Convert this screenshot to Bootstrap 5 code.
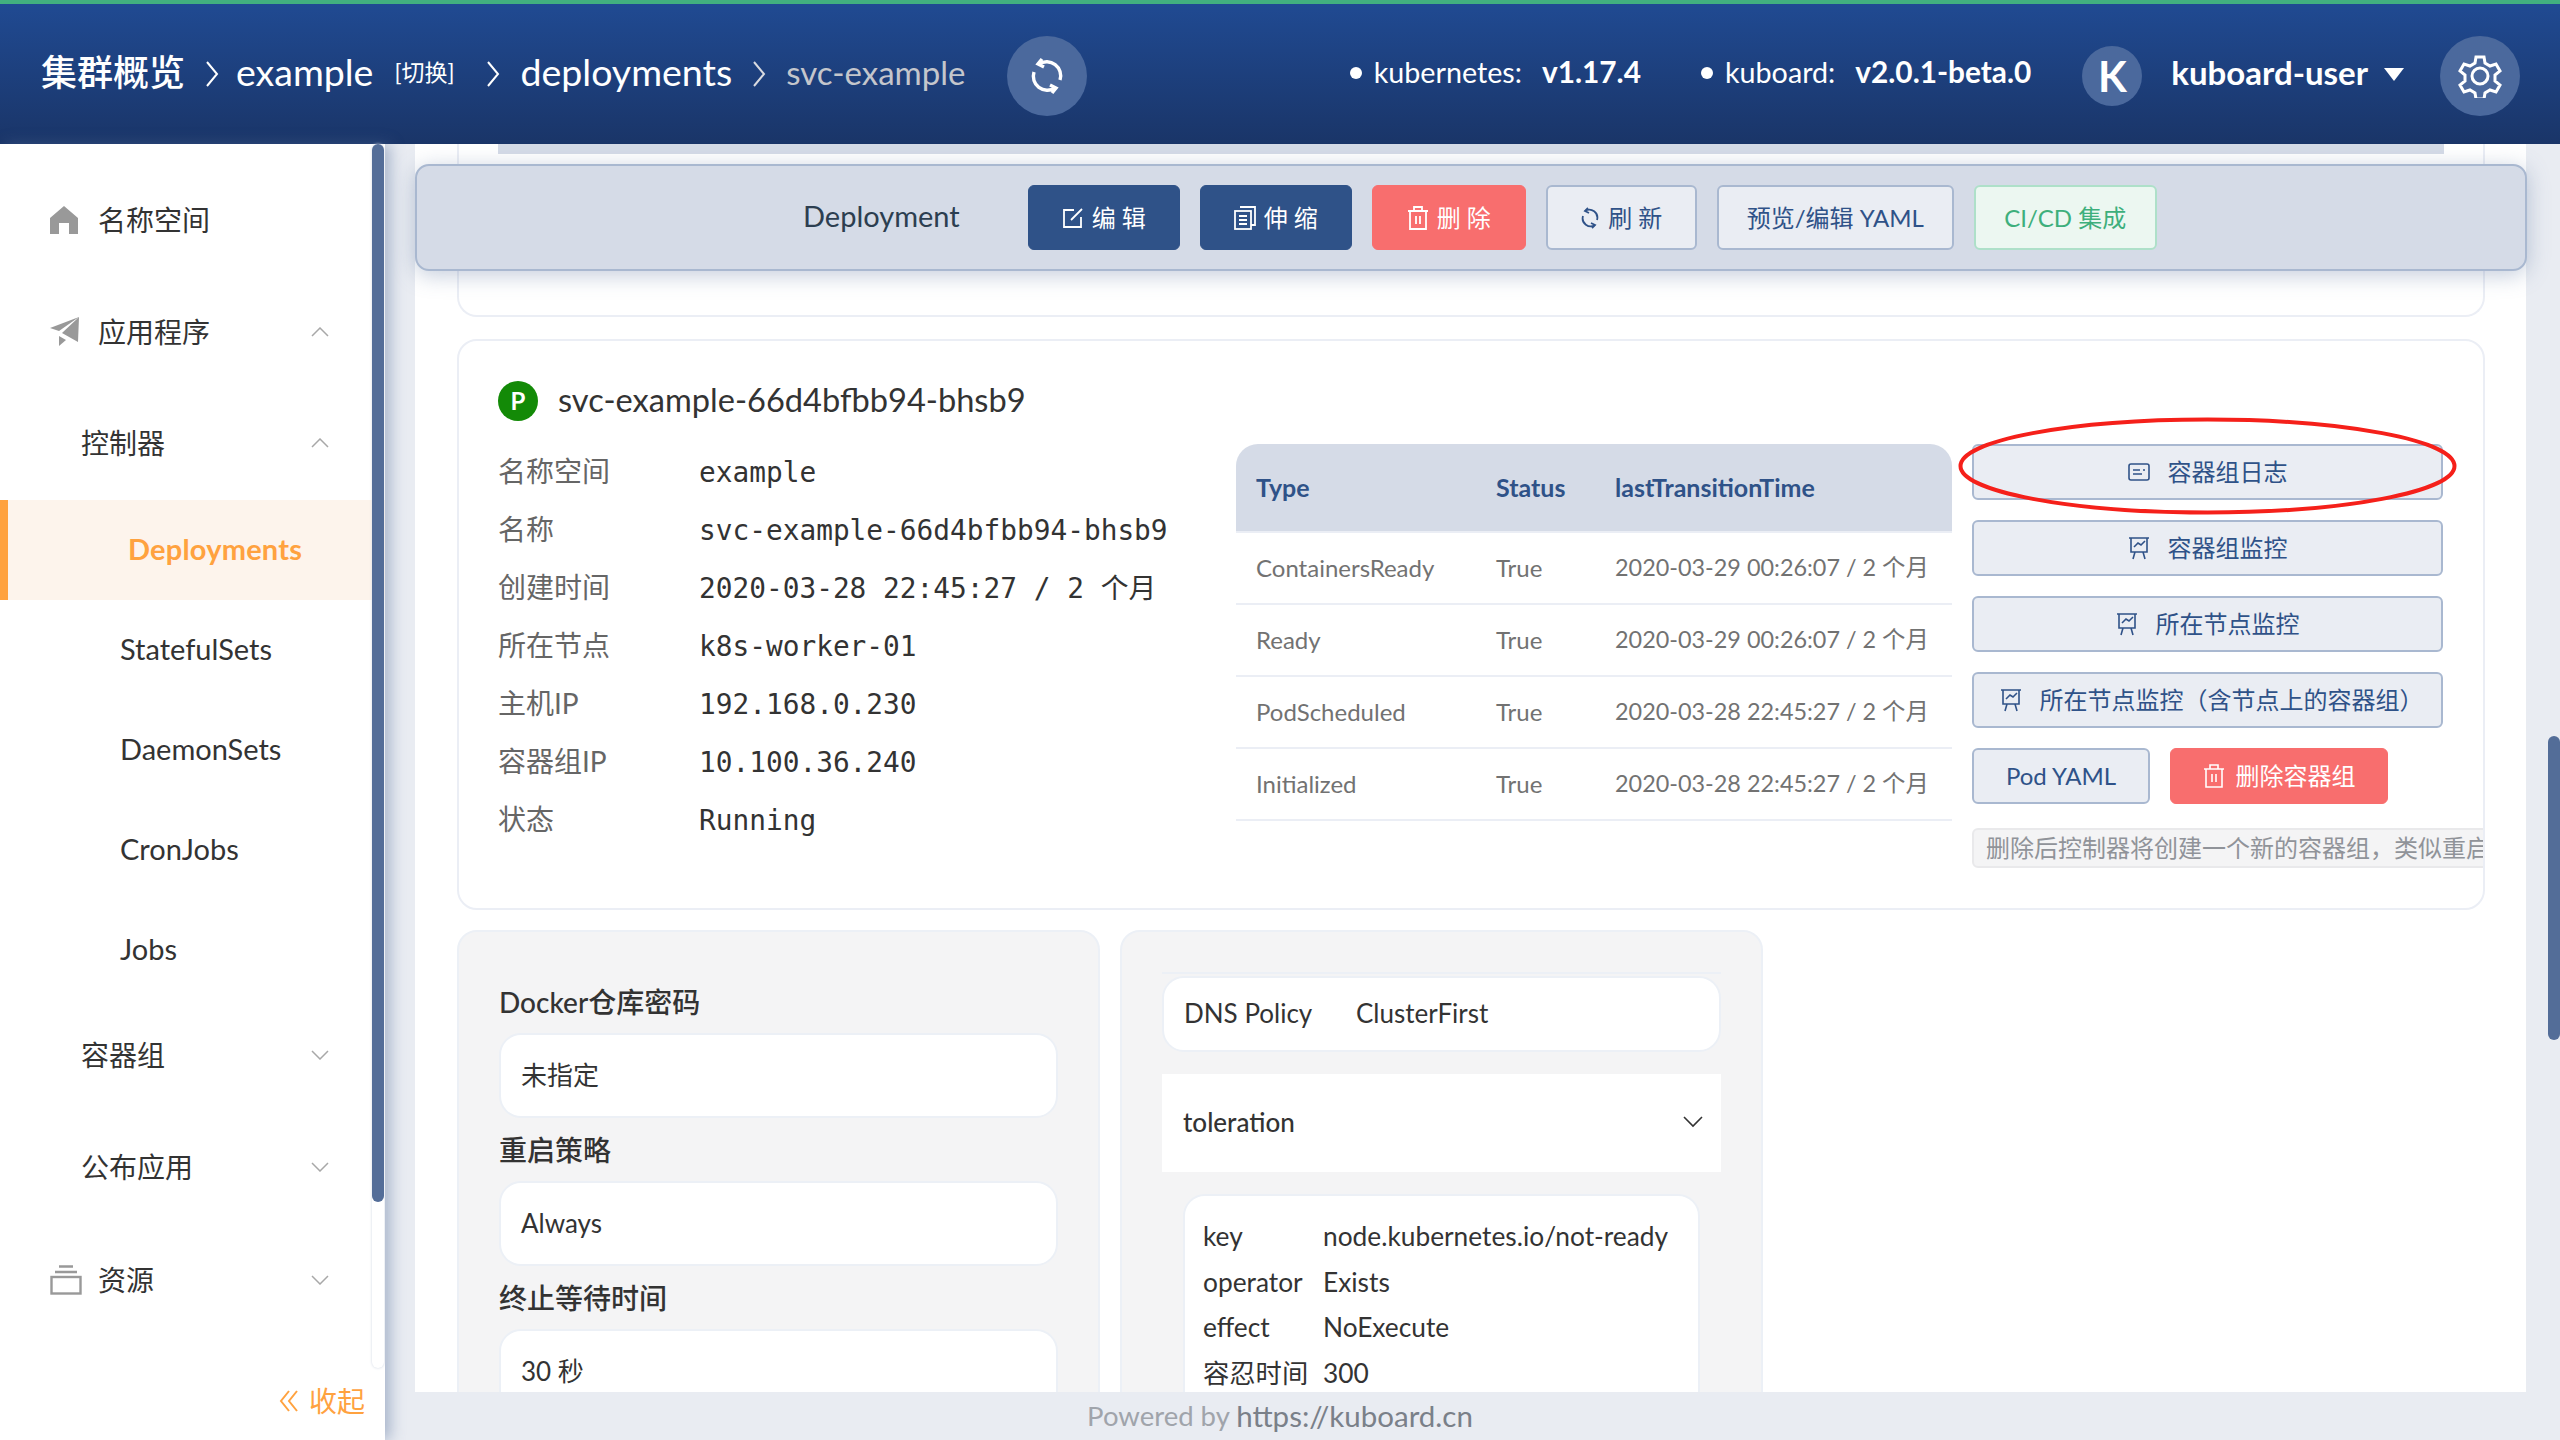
<!DOCTYPE html>
<html lang="zh-CN">
  <head>
    <meta charset="UTF-8" />
    <title>svc-example | Kuboard</title>
    <link href="https://cdn.jsdelivr.net/npm/bootstrap@5.3.0/dist/css/bootstrap.min.css" rel="stylesheet" />
    <style>
      html, body { height: 100%; }
      body {
        width: 2560px; height: 1440px; overflow: hidden;
        font-family: Lato, "Noto Sans CJK SC", sans-serif;
        color: #333; background: #e9ecf2; font-size: 28px;
      }
      svg { display: block; flex: none; }

      /* header */
      .top-bar {
        height: 144px; border-top: 4px solid #42b07f; color: #fff; padding-left: 41px;
        background: linear-gradient(#204a92, #1a3568);
      }
      .crumb-root { font-size: 36px; font-weight: 500; margin-bottom: 5px; }
      .crumb-link { font-size: 37.5px; margin-bottom: 3px; }
      .crumb-switch { font-size: 23px; margin-left: 21px; margin-bottom: 3px; }
      .crumb-last { font-size: 33px; color: #c4c6cc; margin-bottom: 3px; }
      .crumb-sep { margin: 0 20px; }
      .sep-first { margin-right: 17px; }
      .sep-wide { margin-left: 32px; }
      .round-btn {
        width: 80px; height: 80px; border-radius: 50%; background: #4b699d; margin-top: 4px;
        display: flex; align-items: center; justify-content: center; flex: none;
      }
      .round-btn.avatar { width: 60px; height: 60px; font-size: 42px; font-weight: 700; }
      .sync-btn { margin-left: 42px; }
      .gear-btn { margin-right: 40px; }
      .ver-info { font-size: 28.7px; margin-bottom: 3px; }
      .ver-k8s { margin-right: 60px; }
      .ver-board { margin-right: 51px; }
      .ver-info i { display: block; width: 12px; height: 12px; border-radius: 50%; background: #fff; margin-right: 12px; }
      .ver-info b { font-weight: 700; font-size: 29.8px; margin-left: 20px; }
      .user-name { font-size: 33px; font-weight: 700; margin: 0 16px 3px 29px; }
      .user-caret { width: 0; height: 0; border: 10px solid transparent; border-top: 13px solid #fff; border-bottom: 0; margin-right: 36px; }

      /* side menu */
      .side-menu { width: 385px; height: 1296px; background: #fff; flex: none; padding-top: 20px; box-shadow: 5px 0 14px rgba(83, 109, 152, .45); z-index: 3; }
      .side-item { height: 112px; padding-right: 56px; color: #333; }
      .side-item.lvl-1 { padding-left: 50px; }
      .side-item.lvl-2 { padding-left: 81px; padding-bottom: 3px; }
      .side-item .item-icon { width: 28px; margin-right: 20px; }
      .side-sub { height: 100px; padding-left: 120px; padding-bottom: 3px; font-size: 29px; color: #333; }
      .side-sub.active { background: #fdf4ec; border-left: 8px solid #ffa23f; padding-left: 120px; color: #ffa23f; font-weight: 700; letter-spacing: .2px; }
      .side-track { top: 0; right: 1px; width: 12px; height: 1224px; border-radius: 6px; box-shadow: 0 0 3px #cfd6e2; background: #fff; }
      .side-thumb { height: 1058px; border-radius: 6px; background: #536d98; }
      .side-fold { right: 20px; bottom: 18px; color: #ffa23f; font-size: 28px; gap: 10px; }

      /* main area */
      .main-area { min-width: 0; height: 1296px; }
      .main-scroll { min-height: 0; overflow: hidden; margin: 0 34px 0 30px; padding: 0 41px 0 42px; background: #fff; }
      .main-foot { height: 48px; font-size: 27.5px; color: #a0a4ab; flex: none; padding-right: 385px; }
      .main-foot span { color: #7a8089; font-size: 29.5px; }
      .page-thumb { right: 0; top: 592px; width: 12px; height: 304px; border-radius: 6px; background: #536d98; z-index: 3; }

      .action-bar {
        left: 30px; right: 33px; top: 20px; height: 107px; z-index: 2; gap: 20px;
        background: #d5dbe7; border: 2px solid #a9b8d0; border-radius: 14px;
        box-shadow: 0 4px 22px rgba(83, 109, 152, .35); padding-left: 386px;
      }
      .action-title { font-size: 29px; color: #2c3e50; margin-right: 48px; margin-bottom: 3px; }
      .act-btn {
        --bs-btn-padding-x: 0; --bs-btn-padding-y: 0; --bs-btn-font-size: 24px; --bs-btn-border-radius: 6px;
        display: flex; align-items: center; justify-content: center; white-space: nowrap; line-height: 1;
      }
      .btn-navy { --bs-btn-bg: #2f5288; --bs-btn-border-color: #2f5288; --bs-btn-color: #fff; }
      .btn-red { --bs-btn-bg: #f86e6e; --bs-btn-border-color: #f86e6e; --bs-btn-color: #fff; }
      .btn-pale { --bs-btn-bg: #eaedf3; --bs-btn-border-color: #a9b8d0; --bs-btn-color: #2f5288; --bs-btn-border-width: 2px; }
      .btn-mint { --bs-btn-bg: #ecf7f1; --bs-btn-border-color: #aee0c9; --bs-btn-color: #3eaf7c; --bs-btn-border-width: 2px; }
      .action-bar .act-btn { height: 65px; }
      .w-edit { width: 152px; } .w-del { width: 154px; } .w-ref { width: 151px; } .w-yaml { width: 237px; } .w-ci { width: 183px; }

      .stub-card { height: 173px; border: 2px solid #ebeef5; border-top: 0; border-radius: 0 0 20px 20px; padding: 0 39px; margin-bottom: 22px; }
      .stub-strip { height: 10px; background: #d5dbe7; }

      .pod-card { height: 571px; border: 2px solid #ebeef5; border-radius: 20px; padding: 37px 0 0 39px; overflow: hidden; margin-bottom: 20px; }
      .pod-badge { width: 40px; height: 40px; border-radius: 50%; background: #138a07; color: #fff; font-size: 24px; font-weight: 700; margin-right: 20px; }
      .pod-title { font-size: 32.6px; line-height: 44px; color: #333; margin-bottom: 2px; }
      .pod-info { width: 738px; flex: none; margin-top: 20px; }
      .info-row { height: 58px; }
      .info-key { width: 201px; color: #666; font-size: 28px; margin-bottom: 5px; }
      .info-val { font-family: "DejaVu Sans Mono", "Noto Sans CJK SC", monospace; font-size: 27.8px; color: #333; white-space: nowrap; }

      .cond-wrap { margin-top: 20px; }
      .cond-table { width: 716px; margin: 0; font-size: 24px; table-layout: fixed; }
      .cond-table th, .cond-table td { padding: 0 0 0 20px; vertical-align: middle; border-bottom: 2px solid #ebeef5; white-space: nowrap; }
      .cond-table th { height: 88px; background: #d5dbe7; color: #2f5288; font-weight: 700; font-size: 25px; }
      .cond-table td { height: 72px; color: #727272; }
      .cond-table td:last-child { font-size: 23.4px; }
      .cond-table th:first-child { border-top-left-radius: 22px; }
      .cond-table th:last-child { border-top-right-radius: 22px; }
      .col-type { width: 240px; }
      .col-status { width: 119px; }
      .pod-side { width: 471px; margin: 20px 0 0 20px; flex: none; gap: 20px; position: relative; }
      .pod-side .act-btn { height: 56px; font-size: 24px; }
      .pod-side .act-btn svg { margin-right: 18px; }
      .pod-side .btn-long { padding-left: 8px; }
      .pod-side .w-pod { width: 178px; }
      .pod-side .w-podrm { width: 218px; }
      .pod-side .w-podrm svg { margin-right: 11px; }
      .pod-btns { gap: 20px; }
      .pod-note { width: 540px; height: 40px; background: #f4f4f5; border: 2px solid #e9e9eb; border-radius: 6px; color: #909399; font-size: 24px; padding-left: 12px; margin-top: 4px; white-space: nowrap; line-height: 36px; }
      .mark-ring { left: -14px; top: -27px; }

      .grey-box { height: 470px; background: #f4f4f5; border: 2px solid #ecf0f6; border-radius: 20px 20px 0 0; }
      .box-left { width: 643px; padding: 55px 40px 0; margin-right: 20px; }
      .box-right { width: 643px; padding: 40px 40px 0; }
      .box-label { font-size: 28px; font-weight: 500; line-height: 30px; height: 30px; color: #333; }
      .white-field { height: 85px; background: #fff; border: 2px solid #ecf0f6; border-radius: 22px; padding-left: 20px; margin: 16px 0 17px; font-size: 26px; color: #333; }
      .dns-line { height: 2px; background: #ecf0f6; margin-bottom: 2px; }
      .dns-row { height: 76px; background: #fff; border: 2px solid #ecf0f6; border-radius: 22px; padding: 0 0 2px 20px; font-size: 26px; margin-bottom: 22px; }
      .dns-row span:first-child { width: 172px; }
      .coll-head { height: 98px; background: #fff; padding: 0 18px 2px 21px; font-size: 26px; font-weight: 500; }
      .toler-card { height: 300px; background: #fff; border: 2px solid #ecf0f6; border-radius: 22px; margin: 22px 21px 0; padding: 18px 18px; font-size: 26.3px; }
      .toler-row { height: 45.5px; }
      .toler-row span:first-child { width: 120px; }
    </style>
  </head>
  <body>
    <header class="top-bar d-flex align-items-center">
      <span class="crumb-root">集群概览</span>
      <svg class="crumb-sep sep-first" width="14" height="30" viewBox="0 0 14 30" fill="none" stroke="#fff" stroke-width="2"><path d="M2 3l10 12L2 27"/></svg>
      <span class="crumb-link">example</span>
      <span class="crumb-switch">[切换]</span>
      <svg class="crumb-sep sep-wide" width="14" height="30" viewBox="0 0 14 30" fill="none" stroke="#fff" stroke-width="2"><path d="M2 3l10 12L2 27"/></svg>
      <span class="crumb-link">deployments</span>
      <svg class="crumb-sep" width="14" height="30" viewBox="0 0 14 30" fill="none" stroke="#d8dae0" stroke-width="2"><path d="M2 3l10 12L2 27"/></svg>
      <span class="crumb-last">svc-example</span>
      <div class="round-btn sync-btn">
        <svg width="40" height="40" viewBox="0 0 40 40" fill="none" stroke="#fff" stroke-width="3.4"><path d="M15 3l-4 5 6 3"/><path d="M12 8a14 14 0 0 1 21 16"/><path d="M25 37l4-5-6-3"/><path d="M28 32A14 14 0 0 1 7 16"/></svg>
      </div>
      <div class="ms-auto d-flex align-items-center">
        <div class="ver-info ver-k8s d-flex align-items-center"><i></i><span>kubernetes:</span><b>v1.17.4</b></div>
        <div class="ver-info ver-board d-flex align-items-center"><i></i><span>kuboard:</span><b>v2.0.1-beta.0</b></div>
        <div class="round-btn avatar">K</div>
        <span class="user-name">kuboard-user</span>
        <span class="user-caret"></span>
        <div class="round-btn gear-btn">
          <svg width="44" height="44" viewBox="0 0 44 44" fill="none" stroke="#fff" stroke-width="3"><path d="M18 3h8l1 6 5 3 6-2 4 7-5 4v6l5 4-4 7-6-2-5 3-1 6h-8l-1-6-5-3-6 2-4-7 5-4v-6l-5-4 4-7 6 2 5-3z"/><circle cx="22" cy="22" r="8"/></svg>
        </div>
      </div>
    </header>

    <div class="d-flex">
      <aside class="side-menu position-relative">
        <div class="side-item lvl-1 d-flex align-items-center">
          <span class="item-icon"><svg width="28" height="28" viewBox="0 0 28 28" fill="#999"><path d="M14 0L0 12v16h9V17h10v11h9V12z"/></svg></span>名称空间
        </div>
        <div class="side-item lvl-1 d-flex align-items-center justify-content-between">
          <span class="d-flex align-items-center"><span class="item-icon"><svg width="30" height="30" viewBox="0 0 30 30" fill="#999"><path d="M29 0L0 11l9 3zM29 0L12 16l16 9z"/><path d="M9 19v10l7-6z"/></svg></span>应用程序</span>
          <svg width="18" height="10" viewBox="0 0 18 10" fill="none" stroke="#a8a8a8" stroke-width="1.5"><path d="M1 9l8-8 8 8"/></svg>
        </div>
        <div class="side-item lvl-2 d-flex align-items-center justify-content-between">
          <span>控制器</span>
          <svg width="18" height="10" viewBox="0 0 18 10" fill="none" stroke="#a8a8a8" stroke-width="1.5"><path d="M1 9l8-8 8 8"/></svg>
        </div>
        <div class="side-sub active d-flex align-items-center">Deployments</div>
        <div class="side-sub d-flex align-items-center">StatefulSets</div>
        <div class="side-sub d-flex align-items-center">DaemonSets</div>
        <div class="side-sub d-flex align-items-center">CronJobs</div>
        <div class="side-sub d-flex align-items-center">Jobs</div>
        <div class="side-item lvl-2 d-flex align-items-center justify-content-between">
          <span>容器组</span>
          <svg width="18" height="10" viewBox="0 0 18 10" fill="none" stroke="#a8a8a8" stroke-width="1.5"><path d="M1 1l8 8 8-8"/></svg>
        </div>
        <div class="side-item lvl-2 d-flex align-items-center justify-content-between">
          <span>公布应用</span>
          <svg width="18" height="10" viewBox="0 0 18 10" fill="none" stroke="#a8a8a8" stroke-width="1.5"><path d="M1 1l8 8 8-8"/></svg>
        </div>
        <div class="side-item lvl-1 d-flex align-items-center justify-content-between">
          <span class="d-flex align-items-center"><span class="item-icon"><svg width="32" height="30" viewBox="0 0 32 30" fill="none" stroke="#999" stroke-width="2.4"><path d="M9 1.5h14M5 7h22"/><rect x="1.5" y="12" width="29" height="16.5"/></svg></span>资源</span>
          <svg width="18" height="10" viewBox="0 0 18 10" fill="none" stroke="#a8a8a8" stroke-width="1.5"><path d="M1 1l8 8 8-8"/></svg>
        </div>
        <div class="side-track position-absolute"><div class="side-thumb"></div></div>
        <div class="side-fold position-absolute d-flex align-items-center">
          <svg width="20" height="24" viewBox="0 0 20 24" fill="none" stroke="#ffa23f" stroke-width="2"><path d="M10 2L2 12l8 10M18 2l-8 10 8 10"/></svg>收起
        </div>
      </aside>

      <main class="main-area flex-grow-1 position-relative d-flex flex-column">
        <div class="page-thumb position-absolute"></div>
        <div class="action-bar position-absolute d-flex align-items-center">
          <span class="action-title">Deployment</span>
          <button class="btn act-btn btn-navy w-edit gap-2"><svg width="22" height="22" viewBox="0 0 22 22" fill="none" stroke="#fff" stroke-width="1.8"><path d="M12 3H2v17h17V10"/><path d="M20 2L9 13"/></svg>编 辑</button>
          <button class="btn act-btn btn-navy w-edit gap-2"><svg width="22" height="24" viewBox="0 0 22 24" fill="none" stroke="#fff" stroke-width="1.8"><path d="M6 1h15v18h-4"/><rect x="1" y="5" width="16" height="18"/><path d="M5 10h8M5 14h8M5 18h8"/></svg>伸 缩</button>
          <button class="btn act-btn btn-red w-del gap-2"><svg width="22" height="24" viewBox="0 0 22 24" fill="none" stroke="#fff" stroke-width="1.8"><path d="M1 5h20M7 5V1h8v4M3 5v18h16V5M9 10v8M13 10v8"/></svg>删 除</button>
          <button class="btn act-btn btn-pale w-ref gap-2"><svg width="20" height="22" viewBox="0 0 20 22" fill="none" stroke="#2f5288" stroke-width="1.8"><path d="M8 1L5 4l4 2"/><path d="M5 4a8 8 0 0 1 12 9"/><path d="M12 21l3-3-4-2"/><path d="M15 18A8 8 0 0 1 3 9"/></svg>刷 新</button>
          <button class="btn act-btn btn-pale w-yaml">预览/编辑 YAML</button>
          <button class="btn act-btn btn-mint w-ci">CI/CD 集成</button>
        </div>

        <div class="main-scroll flex-grow-1">
          <div class="stub-card"><div class="stub-strip"></div></div>

          <section class="pod-card">
            <div class="d-flex align-items-center">
              <span class="pod-badge d-flex align-items-center justify-content-center">P</span>
              <span class="pod-title">svc-example-66d4bfbb94-bhsb9</span>
            </div>
            <div class="d-flex">
              <div class="pod-info">
                <div class="info-row d-flex align-items-center"><span class="info-key">名称空间</span><span class="info-val">example</span></div>
                <div class="info-row d-flex align-items-center"><span class="info-key">名称</span><span class="info-val">svc-example-66d4bfbb94-bhsb9</span></div>
                <div class="info-row d-flex align-items-center"><span class="info-key">创建时间</span><span class="info-val">2020-03-28 22:45:27 / 2 个月</span></div>
                <div class="info-row d-flex align-items-center"><span class="info-key">所在节点</span><span class="info-val">k8s-worker-01</span></div>
                <div class="info-row d-flex align-items-center"><span class="info-key">主机IP</span><span class="info-val">192.168.0.230</span></div>
                <div class="info-row d-flex align-items-center"><span class="info-key">容器组IP</span><span class="info-val">10.100.36.240</span></div>
                <div class="info-row d-flex align-items-center"><span class="info-key">状态</span><span class="info-val">Running</span></div>
              </div>
              <div class="cond-wrap">
                <table class="table cond-table">
                  <colgroup><col class="col-type" /><col class="col-status" /><col /></colgroup>
                  <thead><tr><th>Type</th><th>Status</th><th>lastTransitionTime</th></tr></thead>
                  <tbody>
                    <tr><td>ContainersReady</td><td>True</td><td>2020-03-29 00:26:07 / 2 个月</td></tr>
                    <tr><td>Ready</td><td>True</td><td>2020-03-29 00:26:07 / 2 个月</td></tr>
                    <tr><td>PodScheduled</td><td>True</td><td>2020-03-28 22:45:27 / 2 个月</td></tr>
                    <tr><td>Initialized</td><td>True</td><td>2020-03-28 22:45:27 / 2 个月</td></tr>
                  </tbody>
                </table>
              </div>
              <div class="pod-side d-flex flex-column">
                <button class="btn act-btn btn-pale"><svg width="22" height="20" viewBox="0 0 22 20" fill="none" stroke="#2f5288" stroke-width="1.6"><rect x="1" y="2" width="20" height="16" rx="2"/><path d="M5 8h7M5 12h9M15 8h2"/></svg>容器组日志</button>
                <button class="btn act-btn btn-pale"><svg width="22" height="24" viewBox="0 0 22 24" fill="none" stroke="#2f5288" stroke-width="1.6"><path d="M1 2h20M3 2v14h16V2M7 16l-2 7M15 16l2 7M6 11l4-4 3 2 4-4"/></svg>容器组监控</button>
                <button class="btn act-btn btn-pale"><svg width="22" height="24" viewBox="0 0 22 24" fill="none" stroke="#2f5288" stroke-width="1.6"><path d="M1 2h20M3 2v14h16V2M7 16l-2 7M15 16l2 7M6 11l4-4 3 2 4-4"/></svg>所在节点监控</button>
                <button class="btn act-btn btn-pale btn-long"><svg width="22" height="24" viewBox="0 0 22 24" fill="none" stroke="#2f5288" stroke-width="1.6"><path d="M1 2h20M3 2v14h16V2M7 16l-2 7M15 16l2 7M6 11l4-4 3 2 4-4"/></svg>所在节点监控（含节点上的容器组）</button>
                <div class="pod-btns d-flex">
                  <button class="btn act-btn btn-pale w-pod">Pod YAML</button>
                  <button class="btn act-btn btn-red w-podrm"><svg width="22" height="24" viewBox="0 0 22 24" fill="none" stroke="#fff" stroke-width="1.6"><path d="M1 5h20M7 5V1h8v4M3 5v18h16V5M9 10v8M13 10v8"/></svg>删除容器组</button>
                </div>
                <div class="pod-note">删除后控制器将创建一个新的容器组，类似重启</div>
                <svg class="mark-ring position-absolute" width="499" height="98" viewBox="0 0 499 98" fill="none"><ellipse cx="249.5" cy="49" rx="247" ry="46.5" stroke="#f5201a" stroke-width="4"/></svg>
              </div>
            </div>
          </section>

          <div class="d-flex">
            <section class="grey-box box-left">
              <div class="box-label">Docker仓库密码</div>
              <div class="white-field d-flex align-items-center">未指定</div>
              <div class="box-label">重启策略</div>
              <div class="white-field d-flex align-items-center">Always</div>
              <div class="box-label">终止等待时间</div>
              <div class="white-field d-flex align-items-center">30 秒</div>
            </section>
            <section class="grey-box box-right">
              <div class="dns-line"></div>
              <div class="dns-row d-flex align-items-center"><span>DNS Policy</span><span>ClusterFirst</span></div>
              <div class="coll-head d-flex align-items-center justify-content-between">
                <span>toleration</span>
                <svg width="20" height="12" viewBox="0 0 20 12" fill="none" stroke="#333" stroke-width="1.6"><path d="M1 1l9 9 9-9"/></svg>
              </div>
              <div class="toler-card">
                <div class="toler-row d-flex align-items-center"><span>key</span><span>node.kubernetes.io/not-ready</span></div>
                <div class="toler-row d-flex align-items-center"><span>operator</span><span>Exists</span></div>
                <div class="toler-row d-flex align-items-center"><span>effect</span><span>NoExecute</span></div>
                <div class="toler-row d-flex align-items-center"><span>容忍时间</span><span>300</span></div>
              </div>
            </section>
          </div>
        </div>
        <footer class="main-foot d-flex align-items-center justify-content-center">Powered by&nbsp;<span>https://kuboard.cn</span></footer>
      </main>
    </div>
    <script src="https://cdn.jsdelivr.net/npm/bootstrap@5.3.0/dist/js/bootstrap.bundle.min.js"></script>
  </body>
</html>
